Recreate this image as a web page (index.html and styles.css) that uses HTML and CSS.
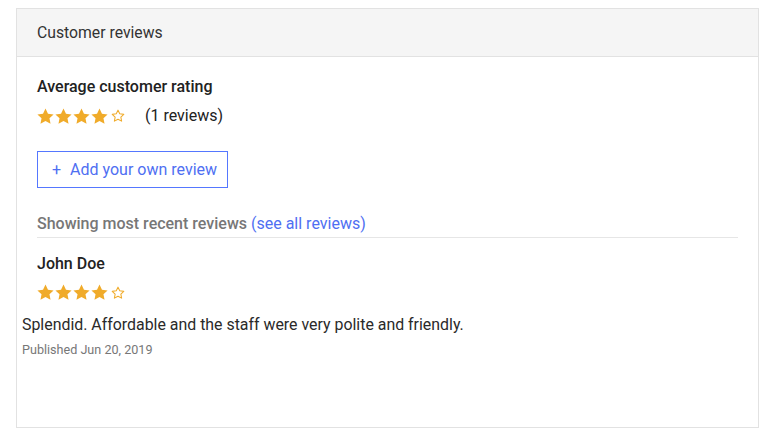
FILE: index.html
```html
<!DOCTYPE html>
<html lang="en">
<head>
  <meta charset="UTF-8" />
  <title>Customer reviews</title>
  <link rel="stylesheet" href="styles.css">
</head>
<body>
  <svg width="0" height="0" style="position:absolute">
    <defs>
      <symbol id="star-full" viewBox="0 0 24 24">
        <path d="M12 .8l3.5 7.2 7.9 1-5.8 5.5 1.5 7.8L12 18.5l-7.1 3.8 1.5-7.8L.6 9l7.9-1z" fill="#f0ab2a"/>
      </symbol>
      <symbol id="star-empty" viewBox="0 0 24 24">
        <path d="M12 2l3 6.3 6.9.9-5 4.8 1.3 6.8L12 17.5l-6.2 3.3 1.3-6.8-5-4.8 6.9-.9z" fill="none" stroke="#f0ab2a" stroke-width="1.8" stroke-linejoin="round"/>
      </symbol>
    </defs>
  </svg>

  <div class="card">
    <div class="card-header">Customer reviews</div>

    <div class="card-body">
      <div class="avg-title">Average customer rating</div>
      <div class="rating-row">
        <div class="stars">
          <svg class="star"><use href="#star-full"/></svg>
          <svg class="star"><use href="#star-full"/></svg>
          <svg class="star"><use href="#star-full"/></svg>
          <svg class="star"><use href="#star-full"/></svg>
          <svg class="star empty"><use href="#star-empty"/></svg>
        </div>
        <span class="count">(1 reviews)</span>
      </div>

      <div class="add-btn"><span class="plus">+</span> Add your own review</div>

      <div class="recent">Showing most recent reviews <span class="link">(see all reviews)</span></div>

      <div class="review">
        <div class="reviewer">John Doe</div>
        <div class="stars">
          <svg class="star"><use href="#star-full"/></svg>
          <svg class="star"><use href="#star-full"/></svg>
          <svg class="star"><use href="#star-full"/></svg>
          <svg class="star"><use href="#star-full"/></svg>
          <svg class="star empty"><use href="#star-empty"/></svg>
        </div>
      </div>
    </div>

    <p class="review-text">Splendid. Affordable and the staff were very polite and friendly.</p>
    <div class="published">Published Jun 20, 2019</div>
  </div>
</body>
</html>
```

FILE: styles.css
```css
body {
  margin: 8px 4px 8px 16px;
  font-family: Roboto, 'Liberation Sans', sans-serif;
  color: #222;
  background-color: #fff;
}

.card {
  border: 1px solid #e2e2e2;
  box-sizing: border-box;
  height: 420px;
}

.card-header {
  background-color: #f5f5f5;
  border-bottom: 1px solid #e2e2e2;
  padding: 0 20px;
  height: 47px;
  line-height: 47px;
  font-size: 15.75px;
  color: #333;
}

.card-body {
  padding: 20px 20px 0 20px;
}

.avg-title {
  font-size: 16px;
  font-weight: 500;
  line-height: 20px;
}

.rating-row {
  display: flex;
  align-items: center;
  margin-top: 9px;
}

.stars {
  display: flex;
  align-items: center;
  gap: 1px;
}

.star {
  width: 17px;
  height: 17px;
}

.star.empty {
  width: 14px;
  height: 14px;
  margin-left: 2px;
}

.count {
  font-size: 16px;
  margin-left: 20px;
  line-height: 20px;
}

.add-btn {
  display: inline-block;
  margin-top: 25px;
  border: 1px solid #5577ff;
  color: #4f6ff2;
  font-size: 16px;
  padding: 0 10px 0 14px;
  height: 35px;
  line-height: 35px;
  cursor: pointer;
}

.plus {
  margin-right: 5px;
}

.recent {
  margin-top: 26px;
  padding-bottom: 3px;
  border-bottom: 1px solid #e6e6e6;
  font-size: 16px;
  font-weight: 500;
  color: #777;
  line-height: 20px;
}

.link {
  color: #4f6ff2;
  font-weight: 400;
  cursor: pointer;
}

.reviewer {
  margin-top: 16px;
  font-size: 16px;
  font-weight: 500;
  line-height: 20px;
}

.review .stars {
  margin-top: 10px;
}

.review-text {
  margin: 14px 0 0 5px;
  font-size: 15.9px;
  line-height: 20px;
  color: #2a2a2a;
}

.published {
  margin: 7px 0 0 5px;
  font-size: 12.6px;
  color: #777;
}
```
